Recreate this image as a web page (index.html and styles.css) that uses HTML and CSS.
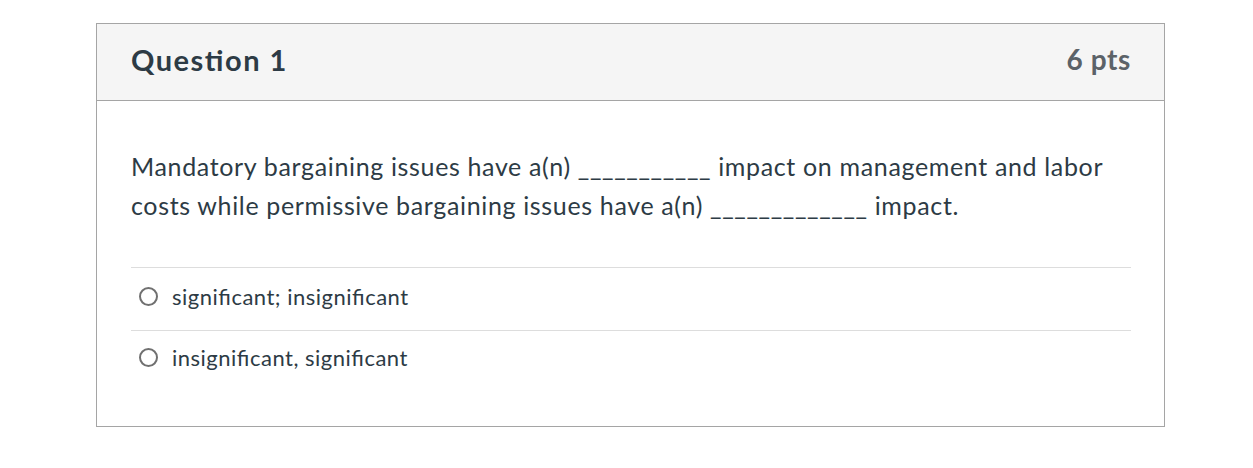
FILE: index.html
```html
<!DOCTYPE html>
<html>
<head>
<meta charset="utf-8">
<link rel="stylesheet" href="styles.css">
</head>
<body>
<div class="page">
  <div class="question">
    <div class="header">
      <h2 class="title">Question 1</h2>
      <div class="points">6 pts</div>
    </div>
    <div class="content">
      <p class="text">Mandatory bargaining issues have a(n) ___________ impact on management and labor costs while permissive bargaining issues have a(n) _____________ impact.</p>
      <div class="answers">
        <label class="answer"><span class="radio"></span><span class="label">significant; insignificant</span></label>
        <label class="answer"><span class="radio"></span><span class="label">insignificant, significant</span></label>
      </div>
    </div>
  </div>
</div>
</body>
</html>
```

FILE: styles.css
```css
html, body {
  margin: 0;
  padding: 0;
  background: #ffffff;
}
body {
  font-family: Lato, "Noto Sans", sans-serif;
  color: #2d3b45;
  font-feature-settings: "liga" 1;
  font-variant-ligatures: common-ligatures;
}
.page {
  padding: 23px 0 0 96px;
}
.question {
  width: 1069px;
  border: 1px solid #a5a5a5;
  box-sizing: border-box;
  height: 404px;
}
.header {
  display: flex;
  justify-content: space-between;
  align-items: center;
  background: #f5f5f5;
  border-bottom: 1px solid #a5a5a5;
  height: 77px;
  padding: 0 33px 6px 34px;
  box-sizing: border-box;
}
.title {
  margin: 0;
  font-size: 29px;
  letter-spacing: 1.5px;
  font-weight: 700;
  color: #2d3b45;
}
.points {
  font-size: 28px;
  letter-spacing: 0.6px;
  font-weight: 700;
  color: #5b6268;
}
.content {
  padding: 46px 33px 0 34px;
}
.text {
  margin: 0;
  font-size: 25px;
  letter-spacing: 0.65px;
  line-height: 39px;
}
.answers {
  margin-top: 42px;
}
.answer {
  display: flex;
  align-items: center;
  border-top: 1px solid #dddddd;
  height: 63px;
  padding: 0 0 5px 8px;
  box-sizing: border-box;
}
.answer + .answer {
  padding-bottom: 9px;
}
.radio {
  width: 15px;
  height: 15px;
  border: 2px solid #707070;
  border-radius: 50%;
  margin-right: 14px;
}
.label {
  font-size: 22px;
  letter-spacing: 0.5px;
  color: #2d3b45;
}
```
